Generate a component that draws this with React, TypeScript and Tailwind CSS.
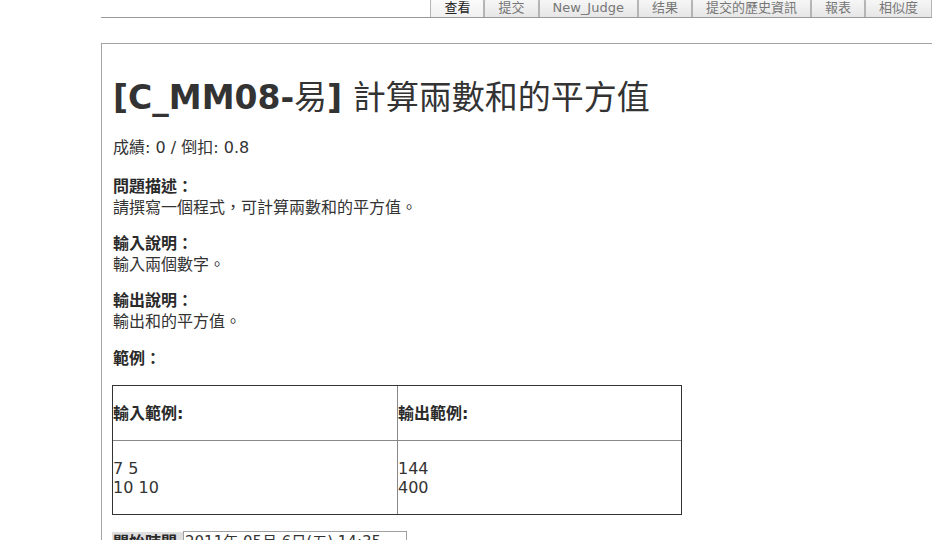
import { useState } from "react";

const tabs = ["查看", "提交", "New_Judge", "结果", "提交的歷史資訊", "報表", "相似度"];

function App() {
  const [active, setActive] = useState("查看");

  return (
    <div
      className="min-h-screen w-full bg-white text-[#333] overflow-hidden"
      style={{ fontFamily: '"DejaVu Sans", "Noto Sans CJK TC", sans-serif' }}
    >
      {/* Tabs */}
      <div className="ml-[101px] flex h-[18px] justify-end border-b border-[#9a9a9a]">
        {tabs.map((tab) => (
          <button
            key={tab}
            onClick={() => setActive(tab)}
            className={`-mt-[5px] h-[22px] rounded-t-[7px] border-x border-[#b4b4b4] px-[13px] pt-[3px] text-[13px] leading-[16px] ${
              active == tab
                ? "bg-gradient-to-b from-white to-[#f0f0f0] text-[#222]"
                : "bg-gradient-to-b from-[#fbfbfb] to-[#e6e6e6] text-[#777]"
            }`}
          >
            {tab}
          </button>
        ))}
      </div>

      {/* Problem box */}
      <div className="ml-[101px] mt-[25px] border-l border-t border-[#a3a3a3] pl-[11px] pt-[34px] text-[16px] leading-[21px]">
        <h1 className="text-[33px] leading-[40px] text-[#333]">
          <span className="font-bold">[C_MM08-</span>易<span className="font-bold">]</span> 計算兩數和的平方值
        </h1>

        <p className="mt-[19px]">成績: 0 / 倒扣: 0.8</p>

        <div className="mt-[18px]">
          <div className="font-bold text-[#2a2a2a]">問題描述：</div>
          <div>請撰寫一個程式，可計算兩數和的平方值。</div>
        </div>

        <div className="mt-[15px]">
          <div className="font-bold text-[#2a2a2a]">輸入說明：</div>
          <div>輸入兩個數字。</div>
        </div>

        <div className="mt-[15px]">
          <div className="font-bold text-[#2a2a2a]">輸出說明：</div>
          <div>輸出和的平方值。</div>
        </div>

        <div className="mt-[16px] font-bold text-[#2a2a2a]">範例：</div>

        {/* Sample table */}
        <div className="-ml-[1px] mt-[16px] w-[570px] border border-[#333]">
          <div className="flex h-[55px] border-b border-[#888] font-bold text-[#2a2a2a]">
            <div className="flex w-[285px] items-center border-r border-[#888]">輸入範例:</div>
            <div className="flex flex-1 items-center">輸出範例:</div>
          </div>
          <div className="flex h-[73px] leading-[19px]">
            <div className="flex w-[285px] flex-col justify-center border-r border-[#888]">
              <span>7 5</span>
              <span>10 10</span>
            </div>
            <div className="flex flex-1 flex-col justify-center">
              <span>144</span>
              <span>400</span>
            </div>
          </div>
        </div>

        {/* Start time */}
        <div className="mt-[16px] flex items-start">
          <div className="-ml-[1px] mt-[1px] w-[71px] bg-[#dedede] pl-[1px] font-bold text-[#2a2a2a]">開始時間</div>
          <div className="w-[224px] border border-[#a0a0a0] pl-[1px] text-[15px]">2011年 05月 6日(五) 14:35</div>
        </div>
        <div className="h-[40px]" />
      </div>
    </div>
  );
}

export default App;
